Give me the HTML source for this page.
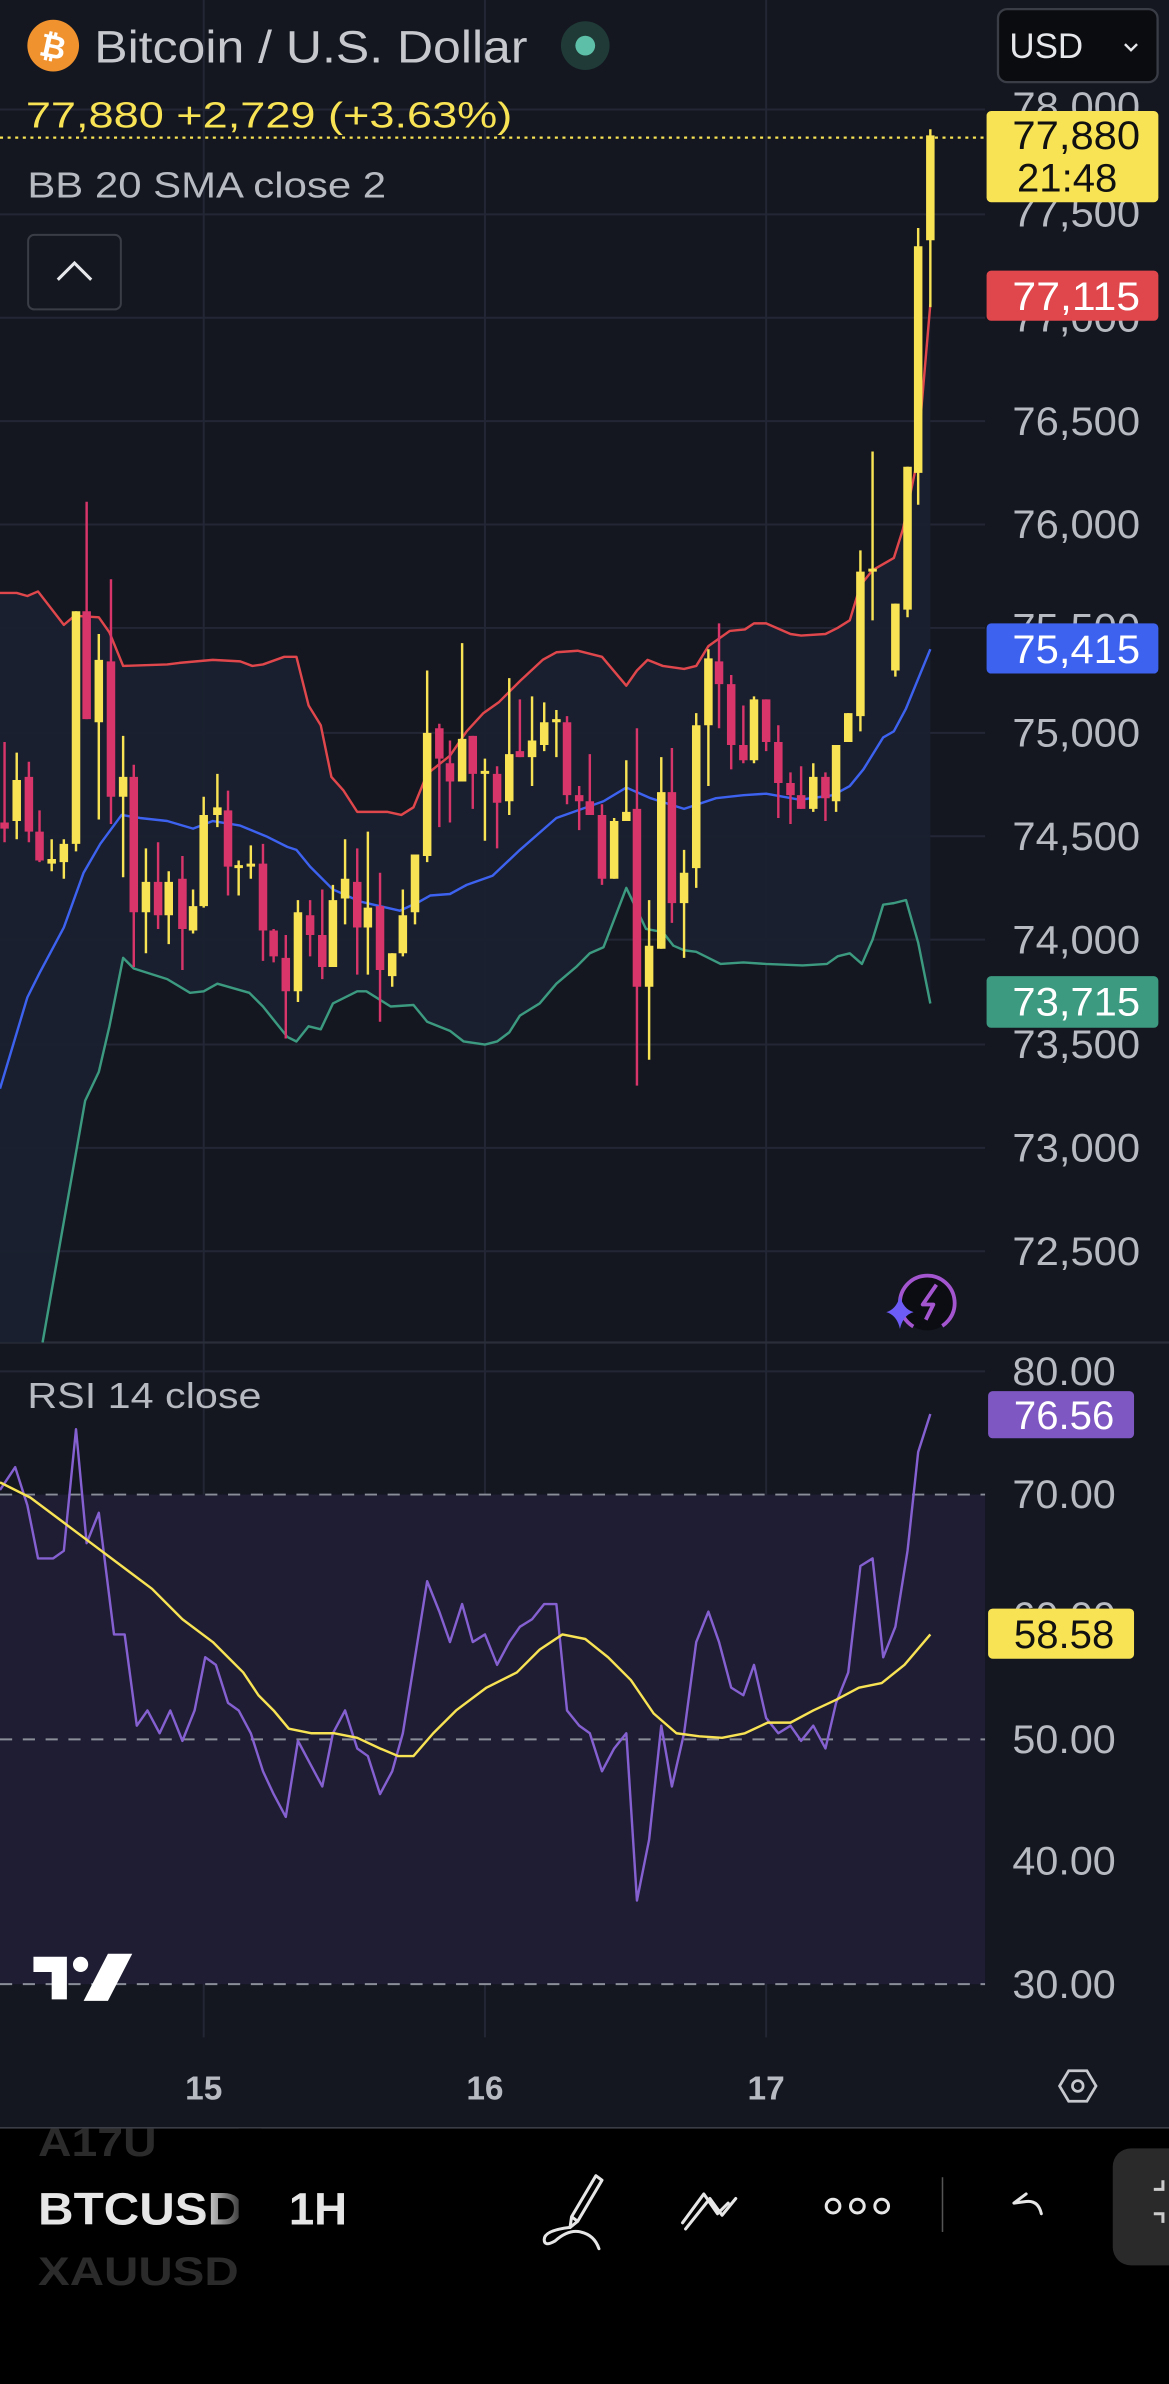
<!DOCTYPE html>
<html><head><meta charset="utf-8"><style>
html,body{margin:0;padding:0;background:#131620;width:1169px;height:2384px;overflow:hidden}
svg{display:block}
text{font-family:"Liberation Sans",sans-serif}
</style></head><body>
<svg width="1169" height="2384" viewBox="0 0 769 1568" preserveAspectRatio="none" xmlns="http://www.w3.org/2000/svg">
<defs>
<clipPath id="cm"><rect x="0" y="60" width="648" height="823"/></clipPath>
<clipPath id="cr"><rect x="0" y="884" width="648" height="456"/></clipPath>
<linearGradient id="fd" x1="0" x2="1"><stop offset="0.8" stop-color="#e6e6e6"/><stop offset="1" stop-color="#e6e6e6" stop-opacity="0.2"/></linearGradient>
</defs>
<rect width="769" height="1568" fill="#141720"/>
<g stroke="#232735" stroke-width="1.3">
<path d="M0 72H648M0 141H648M0 209H648M0 277H648M0 345H648M0 413H648M0 482H648M0 550H648M0 618H648M0 687H648M0 755H648M0 823H648"/>
<path d="M0 902H648M0 1063H648M0 1224H648"/>
<path d="M134 0V1340M319 0V1340M504 0V1340"/>
</g>
<line x1="0" y1="883" x2="769" y2="883" stroke="#2a2e39" stroke-width="1.5"/>
<g clip-path="url(#cm)">
<polygon fill="#1a2030" opacity="0.9" points="0,390 11,390 18,392 25,389 42,411 49,405 65,406 72,416 81,438 110,437 118,436 140,434 158,435 166,438 173,437 187,432 195,432 203,464 211,477 218,511 226,520 235,534 255,534 264,536 272,531 281,509 296,497 307,481 318,469 328,462 342,448 357,434 366,429 380,428 396,432 412,451 419,441 426,434 436,438 450,440 458,438 466,425 480,415 490,414 496,410 504,410 520,417 527,418 543,417 551,413 559,408 566,385 574,375 588,367 594,348 603,305 612,200 612,660 604,620 596,592 588,594 581,595 574,618 567,634 559,627 551,629 544,634 528,635 504,634 489,633 474,634 458,626 450,625 443,622 436,613 425,611 412,584 397,623 388,627 379,636 366,647 355,660 342,668 335,679 327,685 319,687 305,685 296,678 281,672 272,661 257,662 241,652 235,652 219,660 211,677 203,675 195,685 189,682 173,662 164,653 143,647 134,652 125,653 110,644 88,637 81,630 72,675 65,705 56,724 28,883 0,1000"/>
<g fill="none" stroke-width="1.6" stroke-linejoin="round">
<polyline stroke="#e0474c" points="0,390 11,390 18,392 25,389 42,411 49,405 65,406 72,416 81,438 110,437 118,436 140,434 158,435 166,438 173,437 187,432 195,432 203,464 211,477 218,511 226,520 235,534 255,534 264,536 272,531 281,509 296,497 307,481 318,469 328,462 342,448 357,434 366,429 380,428 396,432 412,451 419,441 426,434 436,438 450,440 458,438 466,425 480,415 490,414 496,410 504,410 520,417 527,418 543,417 551,413 559,408 566,385 574,375 588,367 594,348 603,305 612,200"/>
<polyline stroke="#3d62f0" points="0,716 18,656 26,640 42,610 55,574 66,555 80,536 92,538 110,540 127,545 140,540 158,543 175,550 189,557 195,559 204,570 219,585 237,593 250,596 263,599 276,593 283,589 296,588 307,582 324,576 342,559 366,538 397,527 412,518 428,525 450,532 471,525 489,523 504,522 526,526 548,523 559,517 568,506 581,485 588,481 596,466 612,427"/>
<polyline stroke="#3c9a80" points="28,883 56,724 65,705 72,675 81,630 88,637 110,644 125,653 134,652 143,647 164,653 173,662 189,682 195,685 203,675 211,677 219,660 235,652 241,652 257,662 272,661 281,672 296,678 305,685 319,687 327,685 335,679 342,668 355,660 366,647 379,636 388,627 397,623 412,584 425,611 436,613 443,622 450,625 458,626 474,634 489,633 504,634 528,635 544,634 551,629 559,627 567,634 574,618 581,595 588,594 596,592 604,620 612,660"/>
</g>
<g stroke="#f8e354" fill="none">
<path stroke-width="1.6" d="M11 495V552M34 552V573M42 552V578M50 402V560M65 417V539M81 484V577M96 558V627M111 573V621M127 585V614M134 524V597M143 509V544M157 566V589M165 556V578M196 592V659M219 582V636M227 552V608M242 547V641M258 627V649M265 585V629M273 562V608M281 441V567M304 423V514M319 499V553M335 446V536M350 458V517M358 462V494M366 467V498M404 538V578M412 500V540M427 592V697M435 498V624M450 559V630M458 469V584M466 427V517M496 458V502M535 502V534M550 490V534M558 469V488M566 362V481M574 297V408M589 397V445M597 307V406M604 150V332M612 85V202"/>
<path stroke-width="5.6" d="M11 513V540M34 565V568M42 555V567M50 402V555M65 434V475M81 511V524M96 580V600M111 580V602M127 596V612M134 536V596M143 531V536M157 569V571M165 568V570M196 600V652M219 592V636M227 578V591M242 597V610M258 627V642M265 602V627M273 562V600M281 482V563M304 486V514M319 507V509M335 496V527M350 487V498M358 475V490M366 473V475M404 540V578M412 534V540M427 622V649M435 521V624M450 574V594M458 477V571M466 433V477M496 460V500M535 511V532M550 490V527M558 469V488M566 376V471M574 374V376M589 397V441M597 307V401M604 162V311M612 89V158"/>
</g>
<g stroke="#d8356a" fill="none">
<path stroke-width="1.6" d="M3 488V554M19 501V554M26 533V567M57 330V473M73 381V542M88 503V636M104 554V611M120 563V638M150 520V589M173 555V632M180 611V633M188 615V683M204 592V629M212 585V644M235 558V641M250 574V672M289 476V544M296 487V541M311 484V532M327 504V558M342 460V498M373 471V529M381 517V546M388 496V536M396 529V582M419 479V714M442 492V607M473 410V479M481 444V506M489 464V502M504 460V494M512 477V538M520 508V542M527 504V532M543 508V540"/>
<path stroke-width="5.6" d="M3 541V545M19 511V547M26 547V566M57 402V473M73 435V524M88 511V600M104 580V602M120 578V611M150 533V570M173 568V612M180 612V629M188 630V652M204 602V615M212 615V636M235 580V610M250 596V638M289 479V499M296 502V514M311 484V509M327 509V528M342 494V498M373 475V523M381 523V527M388 527V536M396 536V578M419 532V649M442 521V594M473 435V450M481 450V490M489 490V500M504 460V488M512 488V515M520 515V523M527 523V532M543 511V525"/>
</g>
</g>
<line x1="0" y1="90.5" x2="648" y2="90.5" stroke="#f8e354" stroke-width="1.5" stroke-dasharray="2,3"/>
<rect x="0" y="983" width="648" height="322" fill="#1f1d33"/>
<g stroke="#8a8e99" stroke-width="1.3" stroke-dasharray="8,7">
<path d="M0 983H648M0 1144H648M0 1305H648"/>
</g>
<g clip-path="url(#cr)" fill="none" stroke-width="1.6" stroke-linejoin="round">
<polyline stroke="#8460d0" points="0,980 10,965 18,990 25,1025 35,1025 42,1020 50,940 57,1015 65,995 75,1075 82,1075 90,1135 97,1125 105,1140 112,1125 120,1145 128,1125 135,1090 142,1095 150,1120 157,1125 165,1140 173,1165 180,1180 188,1195 196,1145 204,1160 212,1175 219,1140 227,1125 235,1150 242,1155 250,1180 258,1165 265,1140 273,1090 281,1040 289,1060 296,1080 304,1055 311,1080 319,1075 327,1095 335,1080 342,1070 350,1065 358,1055 366,1055 373,1125 381,1135 388,1140 396,1165 404,1150 412,1140 419,1250 427,1210 435,1135 442,1175 450,1140 458,1080 466,1060 473,1080 481,1110 489,1115 496,1095 504,1130 512,1140 520,1135 527,1145 535,1135 543,1150 550,1120 558,1100 566,1030 574,1025 581,1090 589,1070 597,1020 604,955 612,930"/>
<polyline stroke="#f8e354" points="0,975 20,985 40,1000 60,1015 80,1030 100,1045 120,1065 140,1080 150,1090 160,1100 170,1115 180,1125 190,1137 205,1140 220,1140 235,1143 250,1150 262,1155 272,1155 285,1140 300,1125 320,1110 340,1100 355,1085 370,1075 385,1078 400,1090 415,1105 430,1127 445,1140 460,1142 475,1143 490,1140 505,1133 520,1133 535,1125 550,1118 565,1110 580,1107 595,1095 612,1075"/>
</g>
<circle cx="35" cy="30" r="17" fill="#f0922e"/>
<text x="35" y="38" font-size="21" font-weight="bold" fill="#fff" text-anchor="middle" transform="rotate(12 35 30)">₿</text>
<text x="62" y="41" font-size="30" fill="#c6c8ce" textLength="285" lengthAdjust="spacingAndGlyphs">Bitcoin / U.S. Dollar</text>
<circle cx="385" cy="30" r="16" fill="#1f3a37"/>
<circle cx="385" cy="30" r="6.5" fill="#5dbfa7"/>
<rect x="656.5" y="6" width="105" height="48" rx="6" fill="#0b0c10" stroke="#3a3d46" stroke-width="1.5"/>
<text x="664" y="38" font-size="23" fill="#e6e7ea">USD</text>
<path d="M740 29l4 4l4 -4" stroke="#e6e7ea" stroke-width="1.6" fill="none"/>
<text x="17" y="84" font-size="24" fill="#f8e354" textLength="320" lengthAdjust="spacingAndGlyphs">77,880  +2,729 (+3.63%)</text>
<text x="18" y="130" font-size="24" fill="#b8bac2" textLength="236" lengthAdjust="spacingAndGlyphs">BB 20 SMA close 2</text>
<rect x="18.5" y="154.5" width="61" height="49" rx="4" fill="#141720" stroke="#3a3d46" stroke-width="1.3"/>
<path d="M38 184l11 -11l11 11" stroke="#e6e7ea" stroke-width="2" fill="none"/>
<text x="18" y="926" font-size="24" fill="#b8bac2" textLength="154" lengthAdjust="spacingAndGlyphs">RSI 14 close</text>
<g font-size="26" fill="#b8bac2">
<text x="666" y="79" textLength="84" lengthAdjust="spacingAndGlyphs">78,000</text><text x="666" y="149" textLength="84" lengthAdjust="spacingAndGlyphs">77,500</text><text x="666" y="218" textLength="84" lengthAdjust="spacingAndGlyphs">77,000</text>
<text x="666" y="286" textLength="84" lengthAdjust="spacingAndGlyphs">76,500</text><text x="666" y="354" textLength="84" lengthAdjust="spacingAndGlyphs">76,000</text><text x="666" y="422" textLength="84" lengthAdjust="spacingAndGlyphs">75,500</text>
<text x="666" y="491" textLength="84" lengthAdjust="spacingAndGlyphs">75,000</text><text x="666" y="559" textLength="84" lengthAdjust="spacingAndGlyphs">74,500</text><text x="666" y="627" textLength="84" lengthAdjust="spacingAndGlyphs">74,000</text>
<text x="666" y="696" textLength="84" lengthAdjust="spacingAndGlyphs">73,500</text><text x="666" y="764" textLength="84" lengthAdjust="spacingAndGlyphs">73,000</text><text x="666" y="832" textLength="84" lengthAdjust="spacingAndGlyphs">72,500</text>
<text x="666" y="911" textLength="68" lengthAdjust="spacingAndGlyphs">80.00</text><text x="666" y="992" textLength="68" lengthAdjust="spacingAndGlyphs">70.00</text><text x="666" y="1072" textLength="68" lengthAdjust="spacingAndGlyphs">60.00</text>
<text x="666" y="1153" textLength="68" lengthAdjust="spacingAndGlyphs">50.00</text><text x="666" y="1233" textLength="68" lengthAdjust="spacingAndGlyphs">40.00</text><text x="666" y="1314" textLength="68" lengthAdjust="spacingAndGlyphs">30.00</text>
</g>
<rect x="649" y="73" width="113" height="60" rx="3" fill="#f8e354"/>
<text x="666" y="98" font-size="26" fill="#111" textLength="84" lengthAdjust="spacingAndGlyphs">77,880</text>
<text x="669" y="126" font-size="26" fill="#111" textLength="66" lengthAdjust="spacingAndGlyphs">21:48</text>
<rect x="649" y="178" width="113" height="33" rx="3" fill="#e0474c"/>
<text x="666" y="204" font-size="26" fill="#fff" textLength="84" lengthAdjust="spacingAndGlyphs">77,115</text>
<rect x="649" y="410" width="113" height="33" rx="3" fill="#3d62f0"/>
<text x="666" y="436" font-size="26" fill="#fff" textLength="84" lengthAdjust="spacingAndGlyphs">75,415</text>
<rect x="649" y="642" width="113" height="34" rx="3" fill="#3c9a80"/>
<text x="666" y="668" font-size="26" fill="#fff" textLength="84" lengthAdjust="spacingAndGlyphs">73,715</text>
<rect x="650" y="915" width="96" height="31" rx="3" fill="#7e57c2"/>
<text x="667" y="940" font-size="26" fill="#fff" textLength="66" lengthAdjust="spacingAndGlyphs">76.56</text>
<rect x="650" y="1058" width="96" height="33" rx="3" fill="#f8e354"/>
<text x="667" y="1084" font-size="26" fill="#111" textLength="66" lengthAdjust="spacingAndGlyphs">58.58</text>
<circle cx="610" cy="857" r="18" fill="#0c0d12" stroke="#a455d0" stroke-width="2.5" stroke-dasharray="90,20" transform="rotate(130 610 857)"/>
<path d="M616 845l-9 13h7l-5 10" stroke="#a455d0" stroke-width="2.5" fill="none" stroke-linejoin="round"/>
<path d="M592 852q2 9 9 11q-7 2 -9 11q-2 -9 -9 -11q7 -2 9 -11z" fill="#6d5cf5"/>
<g fill="#fff">
<path d="M22 1287h22v28h-10v-18h-12z"/>
<circle cx="53" cy="1292" r="5"/>
<path d="M71 1285h16l-16 31h-16z"/>
</g>
<g font-size="22" font-weight="bold" fill="#b8bac2" text-anchor="middle">
<text x="134" y="1381">15</text><text x="319" y="1381">16</text><text x="504" y="1381">17</text>
</g>
<path d="M703 1362h12l6 10l-6 10h-12l-6 -10z" stroke="#c6c8ce" stroke-width="1.8" fill="none"/>
<circle cx="709" cy="1372" r="3.5" stroke="#c6c8ce" stroke-width="1.8" fill="none"/>
<rect x="0" y="1399" width="769" height="169" fill="#000"/>
<line x1="0" y1="1399.5" x2="769" y2="1399.5" stroke="#3a3d46" stroke-width="1"/>
<text x="25" y="1418" font-size="26" font-weight="bold" fill="#2b2b2b" textLength="78" lengthAdjust="spacingAndGlyphs">A17U</text>
<text x="25" y="1463" font-size="30" font-weight="bold" fill="url(#fd)" textLength="135" lengthAdjust="spacingAndGlyphs">BTCUSD</text>
<text x="190" y="1463" font-size="30" font-weight="bold" fill="#e6e6e6">1H</text>
<text x="25" y="1503" font-size="26" font-weight="bold" fill="#2b2b2b" textLength="132" lengthAdjust="spacingAndGlyphs">XAUUSD</text>
<rect x="157" y="1400" width="15" height="110" fill="#000"/>
<g stroke="#e6e6e6" stroke-width="2" fill="none" stroke-linejoin="round" stroke-linecap="round">
<path d="M392 1431l4 3l-16 27l-4 -3z M376 1458l-1 7l5 -4"/>
<path d="M375 1465q-17 2 -17 8q0 5 7 1q9 -8 17 -6q9 2 12 11"/>
<path d="M449 1462l14 -19l9 13l7 -7M451 1466l16 -20l8 11l9 -11"/>
<circle cx="548" cy="1451" r="4.5"/><circle cx="564" cy="1451" r="4.5"/><circle cx="580" cy="1451" r="4.5"/>
<path d="M675 1443l-8 6l8 -1q8 -1 10 8"/>
</g>
<line x1="620" y1="1432" x2="620" y2="1468" stroke="#555" stroke-width="1"/>
<rect x="732" y="1413" width="60" height="77" rx="12" fill="#2a2a2a"/>
<path d="M765 1434v6h-6M765 1462v-6h-6" stroke="#ccc" stroke-width="2" fill="none"/>
</svg>
</body></html>
